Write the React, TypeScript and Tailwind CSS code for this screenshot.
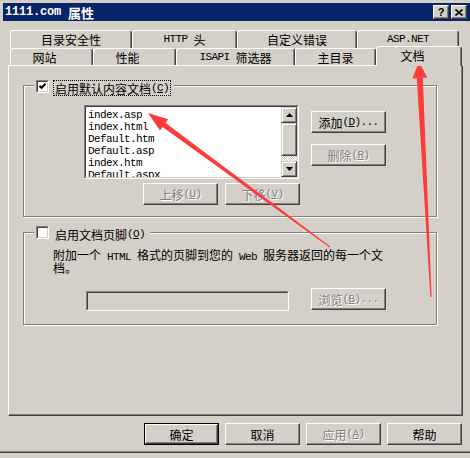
import React from "react";

function M({ children, className = "" }: { children: React.ReactNode; className?: string }) {
  return (
    <span className={"whitespace-pre font-['Liberation_Mono',monospace] text-[11px] tracking-[-0.6px] " + className}>
      {children}
    </span>
  );
}

function U({ children }: { children: React.ReactNode }) {
  return (
    <M>
      (<span className="underline underline-offset-[1px]">{children}</span>)
    </M>
  );
}

function Btn({ children, disabled, def }: { children: React.ReactNode; disabled?: boolean; def?: boolean }) {
  const inner = (
    <div
      className={
        "flex h-full w-full items-center justify-center border border-t-white border-l-white border-r-[#404040] border-b-[#404040] shadow-[inset_-1px_-1px_0_#808080] " +
        (disabled ? "text-[#808080] [text-shadow:1px_1px_0_#fff]" : "text-black")
      }
    >
      {children}
    </div>
  );
  if (def) return <div className="h-[22px] w-[75px] border border-black">{inner}</div>;
  return <div className="h-[22px] w-[75px]">{inner}</div>;
}

function Sunken({ className, innerClass, children }: { className: string; innerClass: string; children?: React.ReactNode }) {
  return (
    <div className={"border border-t-[#808080] border-l-[#808080] border-r-white border-b-white " + className}>
      <div className={"h-full w-full border border-t-[#404040] border-l-[#404040] border-r-[#d4d0c8] border-b-[#d4d0c8] " + innerClass}>
        {children}
      </div>
    </div>
  );
}

function CheckBox({ checked }: { checked?: boolean }) {
  return (
    <Sunken className="h-[13px] w-[13px] shrink-0" innerClass="flex items-center justify-center bg-white">
      {checked ? (
        <svg width="7" height="7" viewBox="0 0 7 7">
          <polyline points="0.5,2.8 2.5,4.8 6.5,0.8" fill="none" stroke="#000" strokeWidth="2" />
        </svg>
      ) : null}
    </Sunken>
  );
}

function ScrollBtn({ up }: { up?: boolean }) {
  return (
    <div className="flex h-[16px] w-[16px] items-center justify-center border border-t-[#d4d0c8] border-l-[#d4d0c8] border-r-[#404040] border-b-[#404040] bg-[#d4d0c8] shadow-[inset_1px_1px_0_#fff,inset_-1px_-1px_0_#808080]">
      <svg width="7" height="4" viewBox="0 0 7 4">
        {up ? <polygon points="3.5,0 7,4 0,4" fill="#000" /> : <polygon points="0,0 7,0 3.5,4" fill="#000" />}
      </svg>
    </div>
  );
}

function TitleBtn({ children }: { children: React.ReactNode }) {
  return (
    <div className="flex h-[14px] w-[16px] items-center justify-center border border-t-white border-l-white border-r-[#404040] border-b-[#404040] bg-[#d4d0c8] shadow-[inset_-1px_-1px_0_#808080]">
      {children}
    </div>
  );
}

const tabBase =
  "flex items-center justify-center border-t border-l border-r border-t-white border-l-white border-r-[#404040] shadow-[inset_-1px_0_0_#808080] rounded-t-[3px] bg-[#d4d0c8]";

export default function App() {
  const items = ["index.asp", "index.html", "Default.htm", "Default.asp", "index.htm", "Default.aspx"];
  return (
    <div className="relative h-[458px] w-[470px] overflow-hidden bg-[#d4d0c8] pt-[3px] font-['Noto_Sans_CJK_SC',sans-serif] text-[12px] leading-[13px] text-black">
      {/* Title bar */}
      <div className="ml-[3px] flex h-[18px] items-center justify-between bg-[#0a246a] pl-[2px] pr-[3px]">
        <div className="flex items-center font-bold text-white">
          <span className="whitespace-pre font-['Liberation_Mono',monospace] text-[12px] tracking-[-0.2px]">1111.com </span>
          <span className="text-[13px]">属性</span>
        </div>
        <div className="flex gap-[2px]">
          <TitleBtn>
            <span className="font-['Liberation_Sans',sans-serif] text-[11px] font-bold leading-[11px]">?</span>
          </TitleBtn>
          <TitleBtn>
            <svg width="8" height="7" viewBox="0 0 8 7">
              <path d="M0.5 0.5 L7.5 6.5 M7.5 0.5 L0.5 6.5" stroke="#000" strokeWidth="1.6" />
            </svg>
          </TitleBtn>
        </div>
      </div>

      {/* Tabs row 1 */}
      <div className="ml-[10px] mt-[9px] flex h-[18px]">
        <div className={tabBase + " h-[18px] w-[122px]"}>目录安全性</div>
        <div className={tabBase + " h-[18px] w-[105px]"}>
          <M>HTTP </M>头
        </div>
        <div className={tabBase + " h-[18px] w-[120px]"}>自定义错误</div>
        <div className={tabBase + " h-[18px] w-[102px]"}>
          <M>ASP.NET</M>
        </div>
      </div>
      {/* Tabs row 2 */}
      <div className="ml-[10px] flex h-[17px] items-start">
        <div className={tabBase + " h-[17px] w-[83px] pr-[14px]"}>网站</div>
        <div className={tabBase + " h-[17px] w-[83px] pr-[14px]"}>性能</div>
        <div className={tabBase + " h-[17px] w-[119px]"}>
          <M>ISAPI </M>筛选器
        </div>
        <div className={tabBase + " h-[17px] w-[81px]"}>主目录</div>
        <div className={tabBase + " relative z-10 -mt-[2px] h-[20px] w-[86px] pb-[3px] pr-[13px]"}>文档</div>
      </div>

      {/* Panel */}
      <div className="ml-[8px] h-[351px] w-[455px] border border-t-white border-l-white border-r-[#404040] border-b-[#404040] pl-[14px] pt-[19px] shadow-[inset_-1px_-1px_0_#808080]">
        {/* Group box 1 */}
        <div className="relative h-[132px] w-[414px] border border-[#808080] pl-[60px] pt-[19px] shadow-[inset_1px_1px_0_#fff,1px_1px_0_#fff]">
          <div className="absolute left-[10px] top-[-6px] flex items-start bg-[#d4d0c8] pl-[2px] pr-[3px]">
            <CheckBox checked />
            <span className="ml-[4px] flex h-[16px] items-center border border-dotted border-black px-[1px]">
              启用默认内容文档<U>C</U>
            </span>
          </div>
          <div className="flex">
            <Sunken className="h-[74px] w-[215px]" innerClass="flex bg-white">
              <div className="flex-1 overflow-hidden pl-[2px]">
                {items.map((t) => (
                  <div key={t} className="h-[12px] leading-[12px]">
                    <M>{t}</M>
                  </div>
                ))}
              </div>
              <div className="flex w-[16px] flex-col">
                <ScrollBtn up />
                <div className="h-[33px] w-[16px] border border-t-[#d4d0c8] border-l-[#d4d0c8] border-r-[#404040] border-b-[#404040] bg-[#d4d0c8] shadow-[inset_1px_1px_0_#fff,inset_-1px_-1px_0_#808080]" />
                <div className="h-[5px] w-[16px] bg-[repeating-conic-gradient(#ffffff_0_25%,#d4d0c8_0_50%)] bg-[length:2px_2px]" />
                <ScrollBtn />
              </div>
            </Sunken>
            <div className="ml-[12px] mt-[6px] flex flex-col gap-[11px]">
              <Btn>
                添加<U>D</U>
                <M>...</M>
              </Btn>
              <Btn disabled>
                删除<U>R</U>
              </Btn>
            </div>
          </div>
          <div className="ml-[59px] mt-[4px] flex gap-[7px]">
            <Btn disabled>
              上移<U>U</U>
            </Btn>
            <Btn disabled>
              下移<U>V</U>
            </Btn>
          </div>
        </div>

        {/* Group box 2 */}
        <div className="relative mt-[15px] h-[93px] w-[414px] border border-[#808080] pl-[29px] pt-[15px] shadow-[inset_1px_1px_0_#fff,1px_1px_0_#fff]">
          <div className="absolute left-[10px] top-[-7px] flex items-start bg-[#d4d0c8] pl-[2px] pr-[3px]">
            <CheckBox />
            <span className="ml-[4px] flex h-[16px] items-center border border-transparent px-[1px]">
              启用文档页脚<U>O</U>
            </span>
          </div>
          <div className="h-[13px] leading-[13px]">
            附加一个<M> HTML </M>格式的页脚到您的<M> Web </M>服务器返回的每一个文
          </div>
          <div className="h-[13px] leading-[13px]">档。</div>
          <div className="ml-[33px] mt-[14px] flex items-start">
            <Sunken className="mt-[3px] h-[20px] w-[203px]" innerClass="bg-[#d4d0c8]" />
            <div className="ml-[22px]">
              <Btn disabled>
                浏览<U>B</U>
                <M>...</M>
              </Btn>
            </div>
          </div>
        </div>
      </div>

      {/* Bottom buttons */}
      <div className="mt-[7px] flex justify-end gap-[6px] pr-[8px]">
        <Btn def>确定</Btn>
        <Btn>取消</Btn>
        <Btn disabled>
          应用<U>A</U>
        </Btn>
        <Btn>帮助</Btn>
      </div>
      <div className="mt-[6px] h-[1px] w-full bg-[#808080]" />
      <div className="h-[1px] w-full bg-[#404040]" />

      {/* Red annotation arrows */}
      <svg className="pointer-events-none absolute left-0 top-0" width="470" height="458" viewBox="0 0 470 458">
        <polygon
          points="148,113 168.2,119.3 165.6,122.9 330.3,246.6 329.7,247.4 162.6,126.9 160,130.5"
          fill="#fd3b3b"
        />
        <polygon
          points="419,62 427.3,77.6 422.8,77.8 431.6,297 430.4,297 416.8,78.2 412.3,78.4"
          fill="#fd3b3b"
        />
      </svg>
    </div>
  );
}
